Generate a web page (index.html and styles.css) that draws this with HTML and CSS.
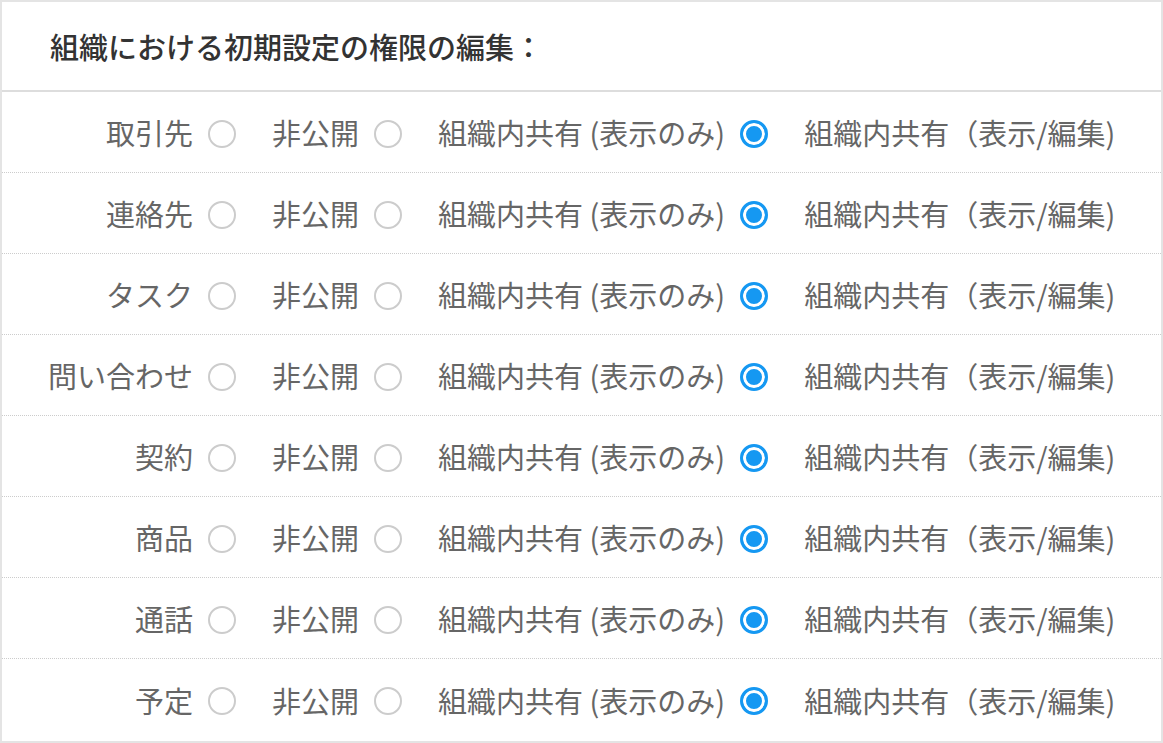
FILE: index.html
```html
<!DOCTYPE html>
<html lang="ja">
<head>
	<meta charset="UTF-8">
	<title>権限の編集</title>
	<link rel="stylesheet" href="styles.css">
</head>
<body>
	<div class="panel">
		<!-- 見出し -->
		<div class="title">組織における初期設定の権限の編集：</div>
		<!-- 各行 -->
		<div class="rows">
			<div class="row">
				<span class="name">取引先</span><span class="radio"></span>
				<span class="opt">非公開</span><span class="radio"></span>
				<span class="opt">組織内共有 (表示のみ)</span><span class="radio on"></span>
				<span class="opt">組織内共有（表示/編集)</span>
			</div>
			<div class="row">
				<span class="name">連絡先</span><span class="radio"></span>
				<span class="opt">非公開</span><span class="radio"></span>
				<span class="opt">組織内共有 (表示のみ)</span><span class="radio on"></span>
				<span class="opt">組織内共有（表示/編集)</span>
			</div>
			<div class="row">
				<span class="name">タスク</span><span class="radio"></span>
				<span class="opt">非公開</span><span class="radio"></span>
				<span class="opt">組織内共有 (表示のみ)</span><span class="radio on"></span>
				<span class="opt">組織内共有（表示/編集)</span>
			</div>
			<div class="row">
				<span class="name">問い合わせ</span><span class="radio"></span>
				<span class="opt">非公開</span><span class="radio"></span>
				<span class="opt">組織内共有 (表示のみ)</span><span class="radio on"></span>
				<span class="opt">組織内共有（表示/編集)</span>
			</div>
			<div class="row">
				<span class="name">契約</span><span class="radio"></span>
				<span class="opt">非公開</span><span class="radio"></span>
				<span class="opt">組織内共有 (表示のみ)</span><span class="radio on"></span>
				<span class="opt">組織内共有（表示/編集)</span>
			</div>
			<div class="row">
				<span class="name">商品</span><span class="radio"></span>
				<span class="opt">非公開</span><span class="radio"></span>
				<span class="opt">組織内共有 (表示のみ)</span><span class="radio on"></span>
				<span class="opt">組織内共有（表示/編集)</span>
			</div>
			<div class="row">
				<span class="name">通話</span><span class="radio"></span>
				<span class="opt">非公開</span><span class="radio"></span>
				<span class="opt">組織内共有 (表示のみ)</span><span class="radio on"></span>
				<span class="opt">組織内共有（表示/編集)</span>
			</div>
			<div class="row">
				<span class="name">予定</span><span class="radio"></span>
				<span class="opt">非公開</span><span class="radio"></span>
				<span class="opt">組織内共有 (表示のみ)</span><span class="radio on"></span>
				<span class="opt">組織内共有（表示/編集)</span>
			</div>
		</div>
	</div>
</body>
</html>
```
FILE: styles.css
```css
body {
	margin: 0;
	padding: 0;
	background-color: #FFF;
	font-family: "Noto Sans CJK JP", "Noto Sans", sans-serif;
}

.panel {
	width: 1163px;
	height: 743px;
	box-sizing: border-box;
	border: 2px solid #E4E4E4;
	background-color: #FFF;
}

.title {
	height: 90px;
	padding-left: 48px;
	box-sizing: border-box;
	border-bottom: 2px solid #DDD;
	display: flex;
	align-items: center;
	font-size: 29px;
	font-weight: 500;
	color: #333;
}

.row {
	height: 81px;
	box-sizing: border-box;
	border-bottom: 1px dotted #CCC;
	display: flex;
	align-items: center;
	font-size: 29px;
	color: #666;
	white-space: nowrap;
}

.row:last-child {
	border-bottom: none;
}

.name {
	width: 191px;
	flex-shrink: 0;
	text-align: right;
}

.opt {
	margin-left: 36px;
}

.radio {
	flex-shrink: 0;
	width: 28px;
	height: 28px;
	margin-left: 15px;
	margin-top: 3px;
	box-sizing: border-box;
	border: 2px solid #CCC;
	border-radius: 50%;
}

.radio.on {
	border: 3px solid #1598F2;
	background-color: #1598F2;
	box-shadow: inset 0 0 0 3px #FFF;
}
```
